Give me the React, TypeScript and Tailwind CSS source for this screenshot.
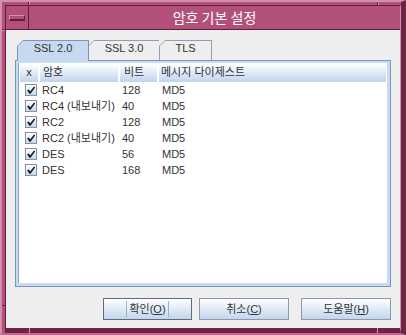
import React from "react";

interface Cipher {
  name: string;
  bits: string;
  digest: string;
}

const ciphers: Cipher[] = [
  { name: "RC4", bits: "128", digest: "MD5" },
  { name: "RC4 (내보내기)", bits: "40", digest: "MD5" },
  { name: "RC2", bits: "128", digest: "MD5" },
  { name: "RC2 (내보내기)", bits: "40", digest: "MD5" },
  { name: "DES", bits: "56", digest: "MD5" },
  { name: "DES", bits: "168", digest: "MD5" },
];

const TabCorner: React.FC<{ stroke: string }> = ({ stroke }) => (
  <svg className="absolute -left-px -top-px" width="7" height="7">
    <polygon points="0,0 6.5,0 0,6.5" fill="#eeeeee" />
    <line x1="0.5" y1="6" x2="6" y2="0.5" stroke={stroke} strokeWidth="1" />
  </svg>
);

const CheckBox: React.FC = () => (
  <div className="w-[12px] h-[12px] border border-[#7d8fa5] bg-linear-to-b from-white to-[#c6d8ec] flex items-center justify-center">
    <svg width="10" height="10" viewBox="0 0 10 10">
      <polygon points="1,5.2 3,4.6 4.1,6.4 8,1.4 9.2,2.4 4.6,8.8 3.4,8.8" fill="#1f1f1f" />
    </svg>
  </div>
);

const App: React.FC = () => {
  return (
    <div className="relative w-[406px] h-[335px] flex flex-col bg-[#b34f7b] border-l-2 border-t-2 border-[#d58fae] border-r-[5px] border-r-[#6d2546] border-b-2 border-b-[#c0668f] font-['Liberation_Sans','Noto_Sans_CJK_KR',sans-serif] text-[11px] text-[#333333] overflow-hidden">
      {/* frame notches */}
      <div className="absolute left-[26px] -top-[2px] h-[5px] w-px bg-[#5e1f3c]" />
      <div className="absolute left-[27px] -top-[2px] h-[5px] w-px bg-[#d58fae]" />
      <div className="absolute left-[375px] -top-[2px] h-[5px] w-px bg-[#5e1f3c]" />
      <div className="absolute left-[376px] -top-[2px] h-[5px] w-px bg-[#d58fae]" />
      <div className="absolute -left-[2px] top-[27px] w-[5px] h-px bg-[#5e1f3c]" />
      <div className="absolute -left-[2px] top-[28px] w-[5px] h-px bg-[#d58fae]" />
      <div className="absolute -left-[2px] top-[303px] w-[5px] h-px bg-[#5e1f3c]" />
      <div className="absolute left-[27px] top-[326px] h-[7px] w-px bg-[#d58fae]" />
      <div className="absolute left-[375px] top-[326px] h-[7px] w-px bg-[#d58fae]" />

      <div className="flex-1 flex flex-col ml-[3px] mt-[3px] border-l border-t border-[#5e1f3c] border-r border-r-[#d58fae] border-b-[5px] border-b-[#6d2546]">
        {/* title bar */}
        <div className="h-[24px] flex border-b border-[#5e1f3c]">
          <div className="w-[23px] flex items-center justify-center border-r border-[#5e1f3c]">
            <div className="w-[16px] h-[6px] border-t border-l border-[#d58fae] border-b-2 border-r border-b-[#5e1f3c] border-r-[#5e1f3c] bg-[#b34f7b]" />
          </div>
          <div className="flex-1 flex items-center justify-center text-white text-[14px] font-['Noto_Sans_CJK_KR',sans-serif] leading-none pb-[1px]">
            암호 기본 설정
          </div>
        </div>

        {/* content */}
        <div className="flex-1 flex flex-col bg-[#eeeeee] px-[9px] pt-[10px] pb-[8px]">
          <div className="flex items-end ml-[2px]">
            <div className="relative z-10 w-[72px] h-[21px] -mb-px border border-b-0 border-[#7b96bb] bg-[#c6d9f0] text-center leading-[14px]">
              <TabCorner stroke="#7b96bb" />
              SSL 2.0
            </div>
            <div className="relative w-[71px] h-[20px] border-t border-r border-[#8aa0bb] text-center leading-[14px]">
              <TabCorner stroke="#8aa0bb" />
              SSL 3.0
            </div>
            <div className="relative w-[52px] h-[20px] border-t border-r border-[#8aa0bb] text-center leading-[14px]">
              <TabCorner stroke="#8aa0bb" />
              TLS
            </div>
          </div>

          <div className="h-[227px] border border-[#7b96bb] flex">
            <div className="flex-1 flex border-l-2 border-t-2 border-r-[3px] border-b-[3px] border-[#c9dbf0]">
              <div className="flex-1 flex flex-col bg-white border-l border-[#8aa6cf]">
                <div className="h-[19px] flex bg-linear-to-b from-white to-[#c0d4ec] border-t border-white">
                  <div className="w-[20px] border-x border-white text-center leading-[16px]">x</div>
                  <div className="w-[80px] border-x border-white pl-[3px] leading-[16px]">암호</div>
                  <div className="w-[39px] border-x border-white pl-[4px] leading-[16px]">비트</div>
                  <div className="flex-1 border-x border-white pl-[2px] leading-[16px]">메시지 다이제스트</div>
                </div>
                {ciphers.map((c, i) => (
                  <div key={i} className="h-[16px] flex items-center leading-[16px]">
                    <div className="w-[20px] flex justify-center pl-[3px]">
                      <CheckBox />
                    </div>
                    <div className="w-[80px] pl-[3px] whitespace-nowrap">{c.name}</div>
                    <div className="w-[39px] pl-[3px]">{c.bits}</div>
                    <div className="flex-1 pl-[4px]">{c.digest}</div>
                  </div>
                ))}
              </div>
            </div>
          </div>

          <div className="mt-[11px] flex justify-end">
            <button className="w-[89px] h-[22px] border border-[#5d6d7f] bg-linear-to-b from-white to-[#c3d6ec] flex items-center justify-center">
              <span className="px-[2px] border-x border-[#9db1c8] leading-[16px]">
                확인(<span className="underline">O</span>)
              </span>
            </button>
            <button className="ml-[7px] w-[90px] h-[22px] border border-[#8a9bb0] bg-linear-to-b from-white to-[#c3d6ec] flex items-center justify-center leading-[16px]">
              <span>
                취소(<span className="underline">C</span>)
              </span>
            </button>
            <button className="ml-[12px] w-[90px] h-[22px] border border-[#8a9bb0] bg-linear-to-b from-white to-[#c3d6ec] flex items-center justify-center leading-[16px]">
              <span>
                도움말(<span className="underline">H</span>)
              </span>
            </button>
          </div>
        </div>
      </div>
    </div>
  );
};

export default App;
